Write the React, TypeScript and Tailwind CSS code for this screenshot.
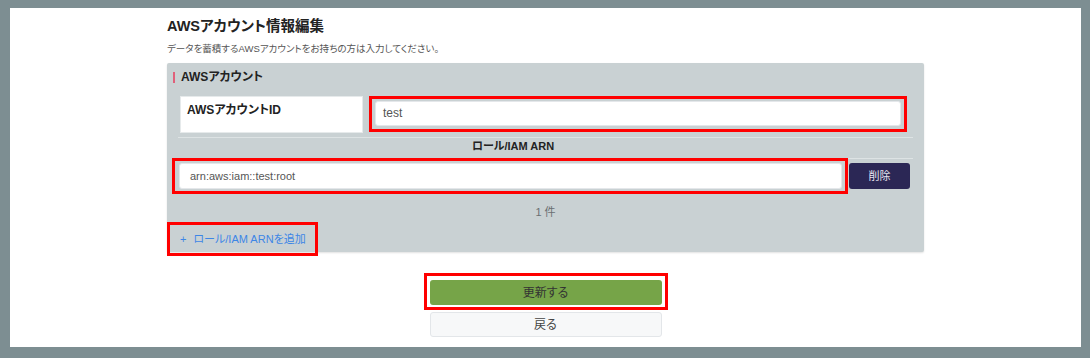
const font = { fontFamily: '"Liberation Sans", "Noto Sans CJK JP", sans-serif' };

export default function App() {
    return (
        <div className="h-[358px] bg-[#7d8e92] pt-[8px] pl-[10px] pr-[9px] pb-[11px] [font-feature-settings:'palt']" style={font}>
            <div className="h-full bg-white">
                <div className="mx-auto w-[757px] pt-[8px]">
                    <h1 className="text-[14.5px] leading-[20px] font-bold text-[#222]">AWSアカウント情報編集</h1>
                    <p className="mt-[6px] text-[9.5px] leading-[14px] text-[#555]">
                        データを蓄積するAWSアカウントをお持ちの方は入力してください。
                    </p>

                    <div className="mt-[7px] h-[189px] rounded-[2px] bg-[#c9d1d3] shadow-[0_1px_2px_rgba(0,0,0,0.12)]">
                        <div className="flex items-center pt-[6px] pl-[6px] h-[22px]">
                            <span className="h-[11px] w-[2px] bg-[#e0607a]" />
                            <span className="ml-[6px] text-[12px] leading-[16px] font-bold text-[#222]">AWSアカウント</span>
                        </div>

                        <div className="mt-[11px] ml-[11px] mr-[11px] border-b border-[#dde3e4] pb-[4px] pl-[2px] flex">
                            <div className="h-[37px] w-[183px] bg-white px-[6px] pt-[5px] text-[12px] leading-[16px] font-bold text-[#222] border border-[#e6eaeb]">
                                AWSアカウントID
                            </div>
                            <div className="ml-[6px] h-[36px] w-[538px] border-[3px] border-[#ff0000] px-[3px] py-[2px]">
                                <div className="h-[25px] rounded-[3px] bg-white border border-[#e4e7ea] pl-[7px] text-[12px] leading-[23px] text-[#555]">
                                    test
                                </div>
                            </div>
                        </div>

                        <div className="ml-[5px] w-[741px]">
                            <div className="flex h-[21px] border-b border-[#dde3e4] ml-[6px]">
                                <div className="w-[670px] text-center text-[11px] leading-[17px] font-bold text-[#222]">ロール/IAM ARN</div>
                            </div>
                            <div className="-mt-[1px] flex items-center">
                                <div className="h-[36px] w-[676px] border-[3px] border-[#ff0000] pl-[4px] pr-[3px] py-[2px]">
                                    <div className="h-[26px] rounded-[3px] bg-white border border-[#e4e7ea] pl-[10px] text-[11px] leading-[24px] text-[#555]">
                                        arn:aws:iam::test:root
                                    </div>
                                </div>
                                <button className="ml-[1px] h-[26px] w-[61px] rounded-[3px] bg-[#2b2755] text-[11px] text-[#e8e6f2]">
                                    削除
                                </button>
                            </div>
                        </div>

                        <div className="mt-[10px] text-center text-[11px] leading-[16px] text-[#6b6f72]">1 件</div>

                        <div className="mt-[5px] ml-[3px] flex h-[28px] w-[145px] items-center pl-[10px] text-[11px] text-[#3d86e6] outline-[3px] outline-solid outline-[#ff0000]">
                            <span className="mr-[7px]">+</span>ロール/IAM ARNを追加
                        </div>
                    </div>

                    <div className="mt-[21px] flex flex-col items-center">
                        <div className="border-[3px] border-[#ff0000] px-[3px] pt-[4px] pb-[2px]">
                            <button className="block h-[25px] w-[232px] rounded-[3px] bg-[#76a448] text-[12px] text-[#333]">
                                更新する
                            </button>
                        </div>
                        <button className="mt-[2px] h-[25px] w-[232px] rounded-[3px] border border-[#e3e6e9] bg-[#f7f8f9] text-[12px] text-[#444]">
                            戻る
                        </button>
                    </div>
                </div>
            </div>
        </div>
    );
}
